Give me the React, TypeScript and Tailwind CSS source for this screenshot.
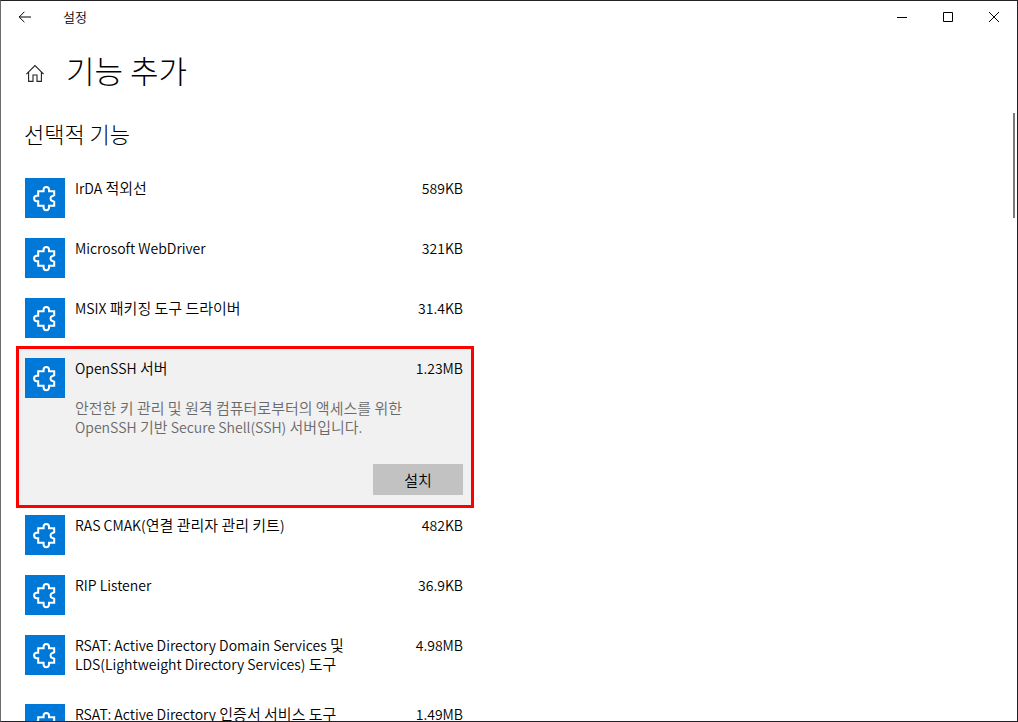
import React from "react";

type Feature = {
  name: string;
  size: string;
  description?: string;
};

const features: Feature[] = [
  { name: "IrDA 적외선", size: "589KB" },
  { name: "Microsoft WebDriver", size: "321KB" },
  { name: "MSIX 패키징 도구 드라이버", size: "31.4KB" },
  {
    name: "OpenSSH 서버",
    size: "1.23MB",
    description:
      "안전한 키 관리 및 원격 컴퓨터로부터의 액세스를 위한 OpenSSH 기반 Secure Shell(SSH) 서버입니다.",
  },
  { name: "RAS CMAK(연결 관리자 관리 키트)", size: "482KB" },
  { name: "RIP Listener", size: "36.9KB" },
  {
    name: "RSAT: Active Directory Domain Services 및 LDS(Lightweight Directory Services) 도구",
    size: "4.98MB",
  },
  { name: "RSAT: Active Directory 인증서 서비스 도구", size: "1.49MB" },
];

// Hangul runs are set one size larger than the Latin text around them.
function MixedText({ text }: { text: string }) {
  return (
    <>
      {text.split(/( ?[가-힣][가-힣 ]*)/).map((run, i) =>
        i % 2 === 1 ? (
          <span key={i} className="text-[15px] leading-none">
            {run}
          </span>
        ) : (
          run
        ),
      )}
    </>
  );
}

function PuzzleIcon() {
  return (
    <svg
      viewBox="0 0 40 40"
      className="size-10 shrink-0 bg-[#0078d7]"
      fill="none"
      stroke="#fff"
      strokeWidth="2"
      strokeLinejoin="miter"
      aria-hidden="true"
    >
      <path d="M13.2 13.3H18.6V11.6A2.7 2.7 0 0 1 24 11.6V13.3H29.2V17.4L27.4 18A2.6 2.6 0 0 0 27.4 23L29.2 23.6V27.7H24V29.6A2.7 2.7 0 0 1 18.6 29.6V27.7H13.2V23.2H11.8A2.7 2.7 0 0 1 11.8 17.8H13.2Z" />
    </svg>
  );
}

function FeatureRow({ feature }: { feature: Feature }) {
  const open = feature.description !== undefined;
  return (
    <li
      className={
        open
          ? "-mt-[2px] -mb-[3px] flex gap-[10px] border-3 border-[#ff0000] bg-[#f1f1f1] pt-[9px] pr-2 pb-[10px] pl-[6px]"
          : "flex gap-[10px] py-[10px] pr-[11px] pl-[9px]"
      }
    >
      <PuzzleIcon />
      <div className="min-w-0 flex-1 pt-px">
        <div className="flex justify-between pb-[10px]">
          <h3 className="max-w-[300px] break-keep">
            <MixedText text={feature.name} />
          </h3>
          <span>{feature.size}</span>
        </div>
        {feature.description !== undefined && (
          <>
            <p className="mt-[11px] max-w-[360px] break-keep text-[#6a6a6a]">
              <MixedText text={feature.description} />
            </p>
            <div className="mt-[27px] flex justify-end">
              <button type="button" className="h-[31px] w-[90px] bg-[#c2c2c2] text-[15px]">
                설치
              </button>
            </div>
          </>
        )}
      </div>
    </li>
  );
}

export default function App() {
  return (
    <div className="flex h-screen flex-col overflow-hidden border border-[#232026] border-l-[#6b6b6b] bg-white font-['Noto_Sans_CJK_KR',sans-serif] text-[14px] leading-[19px] font-[350] text-black">
      <header className="flex h-8 shrink-0 items-center">
        <button type="button" aria-label="뒤로" className="flex h-8 w-12 items-center justify-center">
          <svg viewBox="0 0 14 12" className="h-3 w-[14px]" fill="none" stroke="#000" aria-hidden="true">
            <path d="M13 6H1.2M6.4 .8L1.2 6L6.4 11.2" />
          </svg>
        </button>
        <span className="ml-[14px] flex-1 pb-[2px] text-[13px]">설정</span>
        <button type="button" aria-label="최소화" className="flex h-8 w-[46px] items-center justify-center">
          <svg viewBox="0 0 10 10" className="size-[10px]" stroke="#000" aria-hidden="true">
            <path d="M0 5.5H10" />
          </svg>
        </button>
        <button type="button" aria-label="최대화" className="flex h-8 w-[46px] items-center justify-center">
          <svg viewBox="0 0 10 10" className="size-[10px]" fill="none" stroke="#000" aria-hidden="true">
            <path d="M.5 .5H9.5V9.5H.5Z" />
          </svg>
        </button>
        <button type="button" aria-label="닫기" className="flex h-8 w-[46px] items-center justify-center">
          <svg viewBox="0 0 10 10" className="size-[10px]" stroke="#000" aria-hidden="true">
            <path d="M0 0L10 10M10 0L0 10" />
          </svg>
        </button>
      </header>

      <div className="flex h-20 shrink-0 items-center gap-[21px] pl-6">
        <a href="#home" aria-label="홈">
          <svg viewBox="0 0 20 20" className="size-5" fill="none" stroke="#222" strokeWidth="1.1" aria-hidden="true">
            <path d="M1.4 11.2L10 2.6L18.6 11.2M3.6 9.2V18.4H8V12H12V18.4H16.4V9.2" />
          </svg>
        </a>
        <h1 className="pb-[6px] text-[31px] leading-10 font-light">기능 추가</h1>
      </div>

      <div className="flex min-h-0 flex-1 items-start justify-between pr-[2px]">
        <main className="ml-[15px] w-[458px]">
          <h2 className="px-2 pt-[6px] pb-[21px] text-[22px] leading-7 font-light">선택적 기능</h2>
          <ul>
            {features.map((feature) => (
              <FeatureRow key={feature.name} feature={feature} />
            ))}
          </ul>
        </main>
        <div className="h-[105px] w-[2px] bg-[#7a7a7a]" />
      </div>
    </div>
  );
}
